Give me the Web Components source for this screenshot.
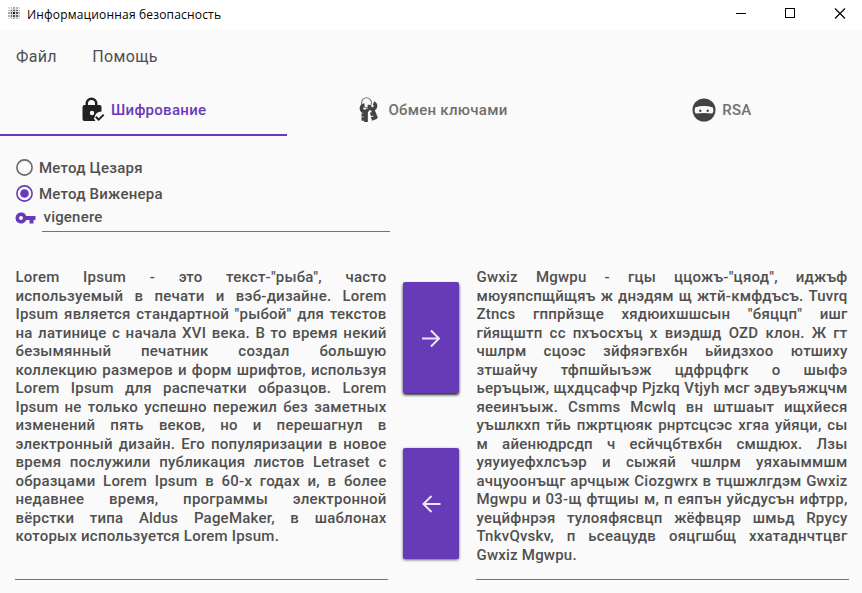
<!DOCTYPE html>
<html lang="ru">
<head>
<meta charset="utf-8">
<title>Информационная безопасность</title>
<style>
html,body{margin:0;height:100%;background:#fafafa;overflow:hidden}
body{font-family:Roboto,"Liberation Sans",sans-serif;color:#505050}
</style>
</head>
<body>
<title-bar>Информационная безопасность</title-bar>
<menu-bar><span>Файл</span><span>Помощь</span></menu-bar>
<tab-bar>
<tab-item selected><glyph-icon slot="icon" name="lock" box="0 0 24 26"></glyph-icon>Шифрование</tab-item>
<tab-item style="padding-left:4px"><glyph-icon slot="icon" name="keys" box="0 0 22 26"></glyph-icon>Обмен ключами</tab-item>
<tab-item style="padding-left:7px"><glyph-icon slot="icon" name="ninja"></glyph-icon>RSA</tab-item>
</tab-bar>
<cipher-page>
<radio-option slot="options">Метод Цезаря</radio-option>
<radio-option slot="options" checked>Метод Виженера</radio-option>
<key-field slot="options">vigenere</key-field>
<text-area slot="source">
Lorem Ipsum - это текст-"рыба", часто
используемый в печати и вэб-дизайне. Lorem
Ipsum является стандартной "рыбой" для текстов
на латинице с начала XVI века. В то время некий
безымянный печатник создал большую
коллекцию размеров и форм шрифтов, используя
Lorem Ipsum для распечатки образцов. Lorem
Ipsum не только успешно пережил без заметных
изменений пять веков, но и перешагнул в
электронный дизайн. Его популяризации в новое
время послужили публикация листов Letraset с
образцами Lorem Ipsum в 60-х годах и, в более
недавнее время, программы электронной
вёрстки типа Aldus PageMaker, в шаблонах
которых используется Lorem Ipsum.
</text-area>
<action-button slot="buttons" raised><glyph-icon name="right"></glyph-icon></action-button>
<action-button slot="buttons"><glyph-icon name="left"></glyph-icon></action-button>
<text-area slot="result">
Gwxiz Mgwpu - гцы ццожъ-"цяод", иджъф
мюуяпспщйщяъ ж днэдям щ жтй-кмфдъсъ. Tuvrq
Ztncs гппрйзще хядюихшшсын "бяццп" ишг
гйящштп сс пхъосхъц х виэдшд OZD клон. Ж гт
чшлрм сцоэс зйфяэгвхбн ьйидзхоо ютшиху
зтшайчу тфпшйыъэж цдфрцфгк о шыфэ
ьеръцыж, щхдцсафчр Pjzkq Vtjyh мсг эдвуъяжцчм
яееинъыж. Csmms Mcwlq вн штшаыт ищхйеся
уъшлкхп тйь пжртцюяк рнртсцсэс хгяа уйяци, сы
м айенюдрсдп ч есйчцбтвхбн смшдюх. Лзы
уяуиуефхлсъэр и сыжяй чшлрм уяхаыммшм
ачцуоонъщг арчцыж Ciozgwrx в тцшжлгдэм Gwxiz
Mgwpu и 03-щ фтщиы м, п еяпън уйсдусън ифтрр,
уецйфнрэя тулояфясвцп жёфвцяр шмьд Rpycy
TnkvQvskv, п ьсеацудв ояцгшбщ ххатаднчтцвг
Gwxiz Mgwpu.
</text-area>
</cipher-page>
<script>
const define = (name, html, setup) => customElements.define(name, class extends HTMLElement {
  connectedCallback() {
    if (this.shadowRoot) return;
    const t = document.createElement('template');
    t.innerHTML = html;
    this.attachShadow({mode: 'open'}).append(t.content.cloneNode(true));
    if (setup) setup(this, this.shadowRoot);
  }
});

define('title-bar', `<style>
:host{display:flex;height:30px;background:#fff;color:#000;align-items:center;padding-left:8px;box-sizing:border-box;font:12px/16px "Open Sans","Noto Sans",sans-serif;letter-spacing:.18px}
svg{display:block;flex:none}
.logo{width:13px;height:13px;margin:0 6px 3px 0}
.name{flex:1;white-space:nowrap;margin-bottom:1px}
.ctl{width:50px;height:30px}
</style>
<svg class="logo" viewBox="0 0 13 13" shape-rendering="crispEdges"></svg><span class="name"><slot></slot></span>
<svg class="ctl" viewBox="0 0 50 30" shape-rendering="crispEdges"><path d="M24 13.5h10" stroke="#000"/></svg>
<svg class="ctl" viewBox="0 0 50 30" shape-rendering="crispEdges"><path d="M23.5 8.5h9v9h-9z" fill="none" stroke="#000"/></svg>
<svg class="ctl" viewBox="0 0 50 30"><path d="M23 8.5l10 10M33 8.5l-10 10" stroke="#000" stroke-width="1.1"/></svg>`,
(host, root) => {
  const at = [0, 3, 5, 8, 11], size = [2, 1, 2, 2, 1];
  let dots = '<rect x="2" y="2" width="9" height="9" opacity=".15"/>';
  at.forEach((y, j) => at.forEach((x, i) => {
    const d = Math.hypot(i - 2, j - 2);
    dots += `<rect x="${x}" y="${y}" width="${size[i]}" height="${size[j]}" opacity="${Math.max(.15, .9 - d * .27)}"/>`;
  }));
  root.querySelector('.logo').innerHTML = dots;
});

define('menu-bar', `<style>
:host{display:flex;gap:35.5px;height:52px;padding-left:16px;align-items:center;font-size:16px;letter-spacing:.32px}
</style><slot></slot>`);

define('tab-bar', `<style>:host{display:grid;grid-template-columns:repeat(3,minmax(0,1fr));height:54px}</style><slot></slot>`);

define('tab-item', `<style>
:host{display:flex;height:54px;box-sizing:border-box;align-items:center;justify-content:center;gap:6px;border-bottom:2px solid transparent;color:#6f6f6f;font-weight:500;font-size:15px;letter-spacing:.28px;padding-top:3px}
:host([selected]){color:#673ab7;border-color:#673ab7}
</style><slot name="icon"></slot><span><slot></slot></span>`);

const icons = {
  lock: `<path fill="#212121" d="M4 8H4.500V6.500a6 6 0 0 1 12 0V8H18.500q2 0 2 2V14.500q-6 0-7 6 0 2 1 3.500H3.500Q1.500 24 1.500 22V10q0-2 2-2z"/><path fill="#fafafa" d="M7 8V6.500a3.500 3.500 0 0 1 7 0V8z"/><circle cx="11" cy="16" r="2.200" fill="#fafafa"/><path fill="none" stroke="#fafafa" stroke-width="5" d="M14.500 19.800l3 3L23 17.200"/><path fill="none" stroke="#212121" stroke-width="2" d="M14.800 19.700l2.900 2.900 5-5"/>`,
  keys: `<circle cx="7.500" cy="5.800" r="5" fill="none" stroke="#777" stroke-width="1.100"/><g fill="none" stroke="#424242"><path stroke-width="3.600" d="M5.500 8A3.300 3.300 0 1 0 9 11.500"/><path stroke-width="3.700" d="M7 13v12M7 18H2.500M7 22H2.500"/><path stroke-width="3.600" d="M14.500 6A3.100 3.100 0 1 1 10.500 8"/><path stroke-width="3.500" d="M13 11l4.300 10.500M15.500 16l-4 1.500M17.500 20.200l-5 1.800"/></g>`,
  ninja: `<circle cx="12" cy="12" r="11.500" fill="#424242"/><path fill="#fafafa" d="M3 9.400Q12 6.500 21 9.400q1 3-.5 6Q12 14.500 3.500 15.400 2 12.500 3 9.400z"/><circle cx="8.300" cy="12.700" r="1.200" fill="#424242"/><circle cx="15.700" cy="12.700" r="1.200" fill="#424242"/>`,
  key: `<path fill="#673ab7" fill-rule="evenodd" d="M11.800 4H21v4h-2v3.500h-4V8h-3.200A5.600 5.600 0 1 1 11.800 4zM6.500 4a2 2 0 1 0 0 4 2 2 0 0 0 0-4z"/>`,
  right: `<path fill="none" stroke="#ece5f6" stroke-width="2" d="M3 12.500h17M12 4.500l8 8-8 8"/>`,
  left: `<path fill="none" stroke="#ece5f6" stroke-width="2" d="M21.500 12H4.500M12.500 4l-8 8 8 8"/>`
};
define('glyph-icon', `<style>:host{display:block;flex:none;width:24px;height:26px}svg{display:block;width:100%;height:100%}</style><svg></svg>`,
(host, root) => {
  const svg = root.querySelector('svg');
  svg.setAttribute('viewBox', host.getAttribute('box') || '0 0 24 24');
  svg.innerHTML = icons[host.getAttribute('name')];
});

define('radio-option', `<style>
:host{display:flex;align-items:center;height:26px;gap:6px;font-weight:500;font-size:15px;letter-spacing:.23px}
svg{width:17px;height:17px;margin-bottom:2px;color:#6a6a6a}
.dot{display:none}
:host([checked]) svg{color:#673ab7}
:host([checked]) .dot{display:block}
</style><svg viewBox="0 0 17 17"><circle cx="8.500" cy="8.500" r="7.600" fill="none" stroke="currentColor" stroke-width="1.600"/><circle class="dot" cx="8.500" cy="8.500" r="4.300" fill="currentColor"/></svg><span><slot></slot></span>`);

define('key-field', `<style>
:host{display:flex;height:25px;width:375px;margin-left:-1px;font-weight:500;font-size:15px;line-height:20px;letter-spacing:.2px}
glyph-icon{width:21px;height:12px;margin:5px 6px 0 0}
div{flex:1;border-bottom:1px solid #747474;padding-left:1.5px;box-sizing:border-box}
</style><glyph-icon name="key" box="0.5 0 21 12"></glyph-icon><div><slot></slot></div>`);

define('text-area', `<style>
:host{display:block;box-sizing:border-box;width:373px;height:313px;border-bottom:1px solid #747474;padding:1px .5px 0;font-weight:500;font-size:15px;letter-spacing:.22px}
p{margin:0;height:18.53px;line-height:18.53px;text-align:justify;text-align-last:justify;white-space:nowrap;width:371px}
p:last-child{text-align-last:left}
</style>`,
(host, root) => {
  for (const line of host.textContent.trim().split('\n')) {
    const p = document.createElement('p');
    p.textContent = line.trim();
    root.append(p);
  }
});

define('action-button', `<style>
:host{display:grid;place-items:center;width:56px;height:111px;border-radius:2px;background:#673ab7;box-shadow:0 1px 3px rgba(0,0,0,.6)}
:host([raised]){box-shadow:0 2px 3px rgba(0,0,0,.85)}
::slotted(glyph-icon){height:24px}
</style><slot></slot>`);

define('cipher-page', `<style>
:host{display:flex;flex-direction:column;padding:19px 0 0 16px}
.work{display:flex;margin:35px 0 0 -1px}
.buttons{display:flex;flex-direction:column;gap:55px;margin:15px 17px 0 15px}
</style><slot name="options"></slot>
<div class="work"><slot name="source"></slot><div class="buttons"><slot name="buttons"></slot></div><slot name="result"></slot></div>`);
</script>
</body>
</html>
